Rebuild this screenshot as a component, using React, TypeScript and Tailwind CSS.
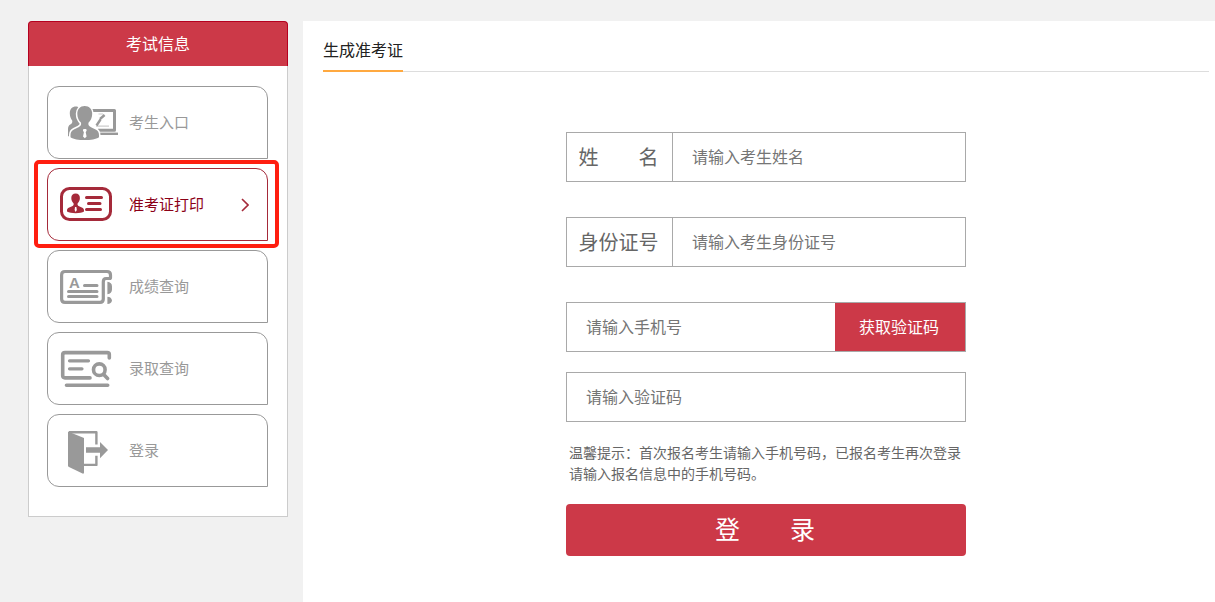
import type { ReactNode } from "react";

function CandidateIcon() {
  return (
    <svg aria-hidden="true" viewBox="0 0 60 47" className="h-[47px] w-[60px] shrink-0" fill="none">
      <path d="M31 11.500H54.500V31.200H38" stroke="currentColor" strokeWidth="3" strokeLinejoin="round" />
      <path d="M40 34.800H58" stroke="currentColor" strokeWidth="2.400" />
      <path d="M36.500 26.500L40.500 20.500M40 20L44.600 16" stroke="currentColor" strokeWidth="2.400" />
      <path d="M38.500 15H43M36 27.200H49" stroke="currentColor" strokeWidth="1.200" opacity=".5" />
      <path
        d="M17 7.600c-4.600-.4-7.200 2.400-7.200 6.800 0 3.200 1.200 5.400 2.400 7 .6 2.200-.6 3.200-2 4.200-1.600 1-2.200 2.400-2.200 4.800v6.800h8V30l6-4V10z"
        fill="currentColor"
      />
      <path
        d="M24.700 7c-4.600 0-7.400 3.200-7.400 7.800 0 4 1.600 7 3.600 8.800.8 2.400-.2 3.600-2.400 4.600l-4.600 2.200c-2.400 1.200-3.400 3-3.400 5.600v2.200C13.400 40.400 18.600 41 24.700 41s11.300-.6 14.300-2.800V36c0-2.600-1-4.400-3.400-5.600L31 28.200c-2.200-1-3.200-2.200-2.400-4.600 2-1.800 3.600-4.800 3.600-8.800 0-4.600-2.900-7.800-7.500-7.800z"
        fill="currentColor"
        stroke="white"
        strokeWidth="3"
        paintOrder="stroke"
      />
      <path d="M23.400 30h2.800l.5 1.600-1 1.600.9 4.400-1.800 1.600-1.800-1.600.9-4.400-1-1.600z" fill="white" />
    </svg>
  );
}

function TicketIcon() {
  return (
    <svg aria-hidden="true" viewBox="0 0 60 47" className="h-[47px] w-[60px] shrink-0" fill="none">
      <rect x="1.500" y="7.500" width="49" height="31" rx="8" stroke="currentColor" strokeWidth="3" />
      <path
        d="M15.700 12.600c-2.800 0-4.400 1.800-4.400 4.400 0 2.400 1 4.200 2.200 5.200.5 1.600 0 2.400-1.400 3l-2.900 1.200C7.600 27 7 28 7 29.600v1c2 1.200 5 1.600 8.700 1.600s6.700-.4 8.300-1.600v-1c0-1.600-.6-2.600-2.200-3.200l-2.700-1.200c-1.400-.6-1.900-1.400-1.400-3 1.200-1 2.200-2.800 2.200-5.200 0-2.600-1.600-4.400-4.200-4.400z"
        fill="currentColor"
      />
      <path d="M15 26h1.400l.4 3-1.100 2-1.100-2z" fill="white" />
      <path d="M26.500 16.400H41.500M28.500 22.500H40M26.500 28.500H40.500" stroke="currentColor" strokeWidth="3" strokeLinecap="round" />
    </svg>
  );
}

function ScoreIcon() {
  return (
    <svg aria-hidden="true" viewBox="0 0 60 47" className="h-[47px] w-[60px] shrink-0" fill="none">
      <path
        d="M46 15.500H49.500Q50.500 15.500 50.500 14.500V12Q50.500 8.500 47 8.500H5Q1.600 8.500 1.600 12V36Q1.600 39.400 5 39.400H40Q43.300 39.400 43.300 36V19Q43.300 15.500 46 15.500"
        stroke="currentColor"
        strokeWidth="3.200"
      />
      <path d="M47.400 18.800c3 .2 4.600 2 4.600 4.600v3.200c0 2.600-1.600 4.400-4.600 4.600zM47.400 33.800c2.800.2 4.200 1.400 4.600 3.600-.4 2.200-1.800 3.400-4.600 3.600z" fill="currentColor" />
      <path d="M24.500 22.400H37M8.500 28.400H37M8.500 33.600H37" stroke="currentColor" strokeWidth="3" strokeLinecap="round" />
      <text x="9" y="25.300" fill="currentColor" fontSize="15" fontWeight="700" fontFamily="Liberation Sans, sans-serif">
        A
      </text>
    </svg>
  );
}

function AdmissionIcon() {
  return (
    <svg aria-hidden="true" viewBox="0 0 60 47" className="h-[47px] w-[60px] shrink-0" fill="none" stroke="currentColor" strokeWidth="3.600" strokeLinecap="round">
      <path d="M49.300 13V9.500Q49.300 7.600 47.300 7.600H5Q2.700 7.600 2.700 9.800V30.600Q2.700 32.900 5 32.900H30" />
      <path d="M9.500 15.800H28.500M9.500 23.800H22" strokeWidth="3.200" />
      <circle cx="39.300" cy="24.700" r="5.800" />
      <path d="M43.700 29.400L47.600 33.500M6.500 40.200H47.700" />
    </svg>
  );
}

function LoginIcon() {
  return (
    <svg aria-hidden="true" viewBox="0 0 60 47" className="h-[47px] w-[60px] shrink-0" fill="none">
      <path d="M8 4.500L24 11V45.500Q24 47 22.500 46.500L9 40Q8 39.500 8 38.500Z" fill="currentColor" />
      <path d="M9 5.200H36.400V17.500M24 37.900H36.400V28.700" stroke="currentColor" strokeWidth="2.400" strokeLinejoin="round" />
      <path d="M26 20.300H40V15L48 23L40 31.300V25.700H26Z" fill="currentColor" />
    </svg>
  );
}

type MenuItem = { label: string; icon: ReactNode; active?: boolean };

const menu: MenuItem[] = [
  { label: "考生入口", icon: <CandidateIcon /> },
  { label: "准考证打印", icon: <TicketIcon />, active: true },
  { label: "成绩查询", icon: <ScoreIcon /> },
  { label: "录取查询", icon: <AdmissionIcon /> },
  { label: "登录", icon: <LoginIcon /> },
];

function Sidebar() {
  return (
    <aside className="w-[260px] shrink-0 self-start">
      <h2 className="flex h-[45px] items-center justify-center rounded-t border border-b-0 border-[#b5001f] bg-[#cc3948] pb-0.5 text-base text-white">
        考试信息
      </h2>
      <nav className="flex flex-col gap-[9px] border border-t-0 border-[#ccc] bg-white pt-5 pr-[19px] pb-[29px] pl-[18px]">
        {menu.map((item) => (
          <a
            key={item.label}
            href="#"
            className={
              "relative flex h-[73px] items-center gap-[9px] rounded-xl rounded-br-none border pr-[18px] pl-3 text-[15px] " +
              (item.active ? "border-[#a52a3a]" : "border-[#999] text-[#999]")
            }
          >
            <span className={item.active ? "text-[#a52a3a]" : "text-[#999]"}>{item.icon}</span>
            <span className={item.active ? "text-[#8b0016]" : "text-[#999]"}>{item.label}</span>
            {item.active && (
              <>
                <svg aria-hidden="true" viewBox="0 0 8 14" className="ml-auto h-3.5 w-2 text-[#a52a3a]" fill="none" stroke="currentColor" strokeWidth="1.600">
                  <path d="M1 1L7 7L1 13" />
                </svg>
                <span className="pointer-events-none absolute -top-[9px] -right-3 -bottom-2 -left-3.5 z-10 rounded-[5px] border-4 border-[#ff1e10]" />
              </>
            )}
          </a>
        ))}
      </nav>
    </aside>
  );
}

function LabeledField({ id, label, placeholder }: { id: string; label: string; placeholder: string }) {
  return (
    <div className="mb-[35px] flex h-[50px] border border-[#a9a9a9]">
      <label htmlFor={id} className="flex w-[106px] shrink-0 items-center justify-center border-r border-[#a9a9a9] pr-0.5 text-xl whitespace-pre text-[#666]">
        {label}
      </label>
      <input id={id} type="text" placeholder={placeholder} className="min-w-0 flex-1 px-[19px] pb-0.5 text-base outline-none placeholder:text-[#757575]" />
    </div>
  );
}

function TicketForm() {
  return (
    <form className="mx-auto mt-[60px] w-full max-w-[400px]" onSubmit={(e) => e.preventDefault()}>
      <LabeledField id="name" label="姓　　名" placeholder="请输入考生姓名" />
      <LabeledField id="idcard" label="身份证号" placeholder="请输入考生身份证号" />
      <div className="mb-5 flex h-[50px] border border-[#a9a9a9]">
        <input type="tel" aria-label="手机号" placeholder="请输入手机号" className="min-w-0 flex-1 px-[19px] pb-0.5 text-base outline-none placeholder:text-[#757575]" />
        <button type="button" className="w-[130px] shrink-0 bg-[#cc3948] pr-0.5 pb-0.5 text-base text-white">
          获取验证码
        </button>
      </div>
      <div className="flex h-[50px] border border-[#a9a9a9]">
        <input type="text" aria-label="验证码" placeholder="请输入验证码" className="min-w-0 flex-1 px-[19px] pb-0.5 text-base outline-none placeholder:text-[#757575]" />
      </div>
      <p className="my-5 px-[3px] text-sm leading-[21px] text-[#666]">
        温馨提示：首次报名考生请输入手机号码，已报名考生再次登录请输入报名信息中的手机号码。
      </p>
      <button type="submit" className="h-[52px] w-full rounded bg-[#cc3948] pr-0.5 pb-0.5 text-[25px] whitespace-pre text-white">
        登　　录
      </button>
    </form>
  );
}

export default function App() {
  return (
    <div
      lang="zh-CN"
      className="flex min-h-screen gap-[15px] bg-[#f1f1f1] pt-[21px] pl-7 font-['Noto_Sans_CJK_SC',sans-serif]"
    >
      <Sidebar />
      <main className="min-w-0 flex-1 bg-white pr-1.5 pl-5">
        <header className="flex h-[51px] border-b border-[#ddd]">
          <h1 className="-mb-px flex items-center border-b-2 border-[#ffa940] pt-2 text-base text-[#222]">
            <span className="pb-0.5">生成准考证</span>
          </h1>
        </header>
        <TicketForm />
      </main>
    </div>
  );
}
